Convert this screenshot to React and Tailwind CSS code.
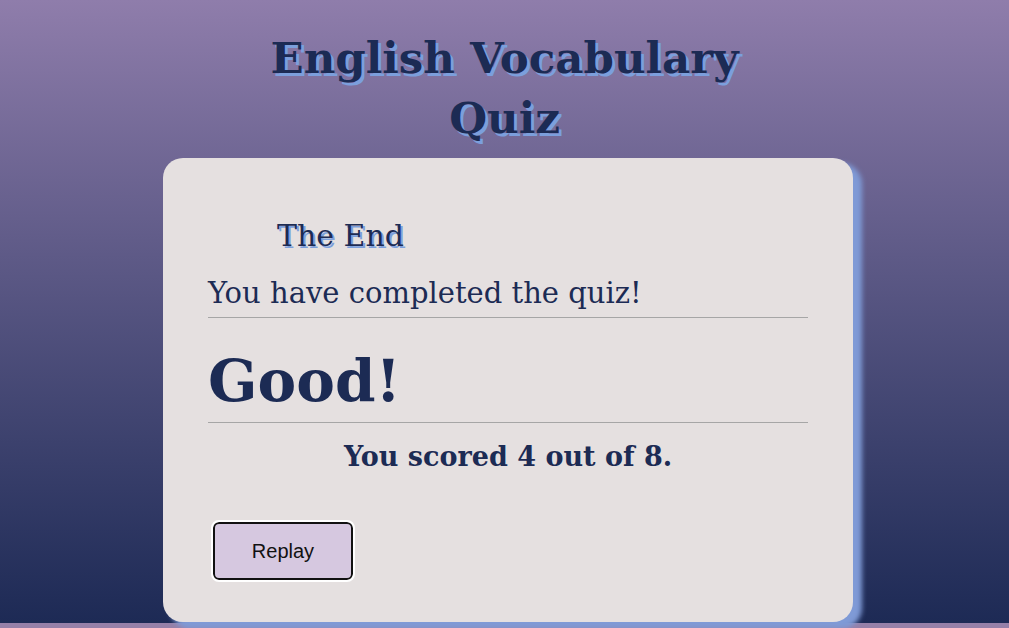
import React from 'react';

const serif = { fontFamily: '"DejaVu Serif", "Liberation Serif", serif' };

const App = () => {
  return (
    <div className="min-h-screen bg-[#9680a8]">
      <div className="h-[623px] bg-gradient-to-b from-[#8f7dab] to-[#1d2a55]" style={serif}>
        <h1 className="mx-auto w-[560px] pt-[28px] text-center text-[43.5px] font-bold leading-[60px] text-[#1c2b54] [text-shadow:3px_3px_0_#7c9fdc]">
          English Vocabulary Quiz
        </h1>
        <div className="ml-[163px] mt-[10px] h-[464px] w-[690px] rounded-[20px] bg-[#e5e0e0] px-[45px] pt-[58px] shadow-[8px_6px_5px_1px_#7f9ad6]">
          <h2 className="pl-[69px] text-[30px] leading-[40px] text-[#1c2b54] [text-shadow:2px_2px_0_#7c9fdc]">
            The End
          </h2>
          <p className="mt-[19px] border-b border-[#a6a6a6] pb-[6px] text-[29px] leading-[36px] text-[#1c2b54]">
            You have completed the quiz!
          </p>
          <p className="mt-[24px] border-b border-[#a6a6a6] pb-[2px] text-[58px] font-bold leading-[78px] text-[#1c2b54]">
            Good!
          </p>
          <p className="mt-[14px] text-center text-[27px] font-bold leading-[40px] text-[#1c2b54]">
            You scored 4 out of 8.
          </p>
          <button
            className="ml-[5px] mt-[45px] h-[58px] w-[140px] rounded-[6px] border-2 border-[#111] bg-[#d6c8e0] text-[20px] text-[#111] outline outline-2 outline-white"
            style={{ fontFamily: '"Liberation Sans", Arial, sans-serif' }}
          >
            Replay
          </button>
        </div>
      </div>
    </div>
  );
};

export default App;
